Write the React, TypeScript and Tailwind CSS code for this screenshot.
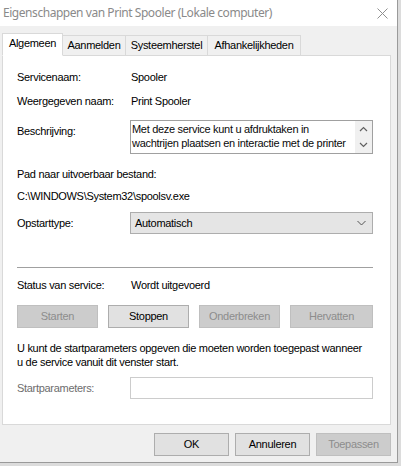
import React from "react";

const ui = { fontFamily: '"Liberation Sans", Arial, sans-serif' };
const titleFont = { fontFamily: '"Noto Sans", "Open Sans", sans-serif' };

function Btn({ label, disabled, className = "" }: { label: string; disabled?: boolean; className?: string }) {
  return (
    <div
      className={
        "h-[23px] flex items-center justify-center text-[11px] border " +
        (disabled
          ? "bg-[#cccccc] border-[#bfbfbf] text-[#8d8d8d]"
          : "bg-[#e1e1e1] border-[#adadad] text-black") +
        " " +
        className
      }
    >
      {label}
    </div>
  );
}

function Row({ label, value, className = "" }: { label: string; value: string; className?: string }) {
  return (
    <div className={"flex h-[15px] items-center " + className}>
      <span className="w-[114px] shrink-0">{label}</span>
      <span>{value}</span>
    </div>
  );
}

export default function App() {
  return (
    <div
      className="w-[401px] h-[466px] bg-[#dcdcdc] overflow-hidden relative tracking-[-0.3px] whitespace-nowrap"
      style={ui}
    >
      <div className="w-[398px] h-[463px] bg-[#f0f0f0] border-r border-b border-[#9a9a9a] flex flex-col">
        {/* title bar */}
        <div className="h-[26px] bg-white flex items-center justify-between pl-[3px] pr-[9px] shrink-0">
          <span className="text-[12px] text-[#8a8a8a] tracking-[-0.45px]" style={titleFont}>
            Eigenschappen van Print Spooler (Lokale computer)
          </span>
          <svg width="11" height="11" viewBox="0 0 11 11">
            <path d="M0.5 0.5L10.5 10.5M10.5 0.5L0.5 10.5" stroke="#8f8f8f" strokeWidth="1" />
          </svg>
        </div>

        {/* tabs */}
        <div className="mt-[7px] ml-[2px] flex items-end h-[22px] text-[11px] text-black relative z-10">
          <div className="h-[23px] w-[61px] justify-center bg-white border border-[#d9d9d9] border-b-white flex items-center -mb-[1px] pb-[3px]">
            Algemeen
          </div>
          <div className="h-[20px] w-[63px] justify-center bg-[#f0f0f0] border border-l-0 border-[#d9d9d9] border-b-0 flex items-center">
            Aanmelden
          </div>
          <div className="h-[20px] w-[82px] justify-center bg-[#f0f0f0] border border-l-0 border-[#d9d9d9] border-b-0 flex items-center">
            Systeemherstel
          </div>
          <div className="h-[20px] w-[93px] justify-center bg-[#f0f0f0] border border-l-0 border-[#d9d9d9] border-b-0 flex items-center">
            Afhankelijkheden
          </div>
        </div>

        {/* tab page */}
        <div className="ml-[2px] w-[389px] h-[370px] bg-white border border-[#d9d9d9] text-[11px] text-black px-[14px] pt-[14px]">
          <Row label="Servicenaam:" value="Spooler" />
          <Row label="Weergegeven naam:" value="Print Spooler" className="mt-[9px]" />

          <div className="flex mt-[11px]">
            <span className="w-[113px] shrink-0 mt-[4px] h-[15px] flex items-center">Beschrijving:</span>
            <div className="w-[243px] h-[34px] border border-[#a0a0a0] flex">
              <div className="flex-1 leading-[14px] pl-[1px] pt-[1px] text-[#0a0a0a]">
                Met deze service kunt u afdruktaken in
                <br />
                wachtrijen plaatsen en interactie met de printer
              </div>
              <div className="w-[17px] bg-[#f0f0f0] flex flex-col items-center justify-between py-[5px]">
                <svg width="9" height="6" viewBox="0 0 9 6">
                  <path d="M1 5L4.5 1.5L8 5" stroke="#606060" strokeWidth="1.2" fill="none" />
                </svg>
                <svg width="9" height="6" viewBox="0 0 9 6">
                  <path d="M1 1L4.5 4.5L8 1" stroke="#606060" strokeWidth="1.2" fill="none" />
                </svg>
              </div>
            </div>
          </div>

          <div className="h-[15px] flex items-center mt-[13px]">Pad naar uitvoerbaar bestand:</div>
          <div className="h-[15px] flex items-center mt-[7px]">C:\WINDOWS\System32\spoolsv.exe</div>

          <div className="flex items-center mt-[8px]">
            <span className="w-[113px] shrink-0">Opstarttype:</span>
            <div className="w-[243px] h-[22px] bg-[#e5e5e5] border border-[#adadad] flex items-center justify-between pl-[4px] pr-[6px]">
              <span>Automatisch</span>
              <svg width="9" height="6" viewBox="0 0 9 6">
                <path d="M0.5 1L4.5 5L8.5 1" stroke="#555" strokeWidth="1" fill="none" />
              </svg>
            </div>
          </div>

          <div className="mt-[33px] h-[1px] bg-[#a0a0a0] w-[356px]" />

          <Row label="Status van service:" value="Wordt uitgevoerd" className="mt-[10px]" />

          <div className="flex gap-[10px] mt-[12px] w-[356px]">
            <Btn label="Starten" disabled className="w-[81px]" />
            <Btn label="Stoppen" className="w-[81px]" />
            <Btn label="Onderbreken" disabled className="w-[81px]" />
            <Btn label="Hervatten" disabled className="w-[83px]" />
          </div>

          <div className="mt-[13px] leading-[14px]">
            U kunt de startparameters opgeven die moeten worden toegepast wanneer
            <br />u de service vanuit dit venster start.
          </div>

          <div className="flex items-center mt-[8px]">
            <span className="w-[113px] shrink-0 text-[#6d6d6d]">Startparameters:</span>
            <div className="w-[243px] h-[22px] bg-white border border-[#cccccc]" />
          </div>
        </div>

        {/* dialog buttons */}
        <div className="mt-[8px] ml-[2px] w-[389px] flex justify-end gap-[6px]">
          <Btn label="OK" className="w-[75px]" />
          <Btn label="Annuleren" className="w-[75px]" />
          <Btn label="Toepassen" disabled className="w-[75px]" />
        </div>
      </div>
    </div>
  );
}
